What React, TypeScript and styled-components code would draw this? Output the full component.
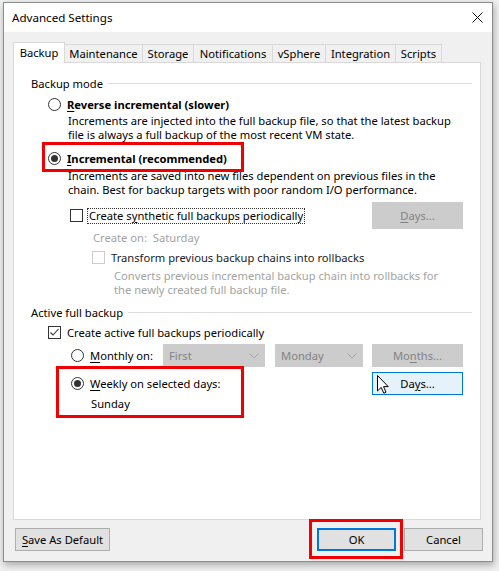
import React from "react";
import styled, { createGlobalStyle } from "styled-components";

const GlobalStyle = createGlobalStyle`
	html, body {
		margin: 0;
		padding: 0;
		background: #f0f0f0;
		font-family: "Noto Sans", "Liberation Sans", sans-serif;
		font-size: 11.2px;
		color: #000;
	}
	* {
		box-sizing: border-box;
	}
`;

const Page = styled.div`
	width: 499px;
	height: 571px;
	padding: 2px 0 0 3px;
	overflow: hidden;
`;

const Dialog = styled.div`
	width: 490px;
	height: 560px;
	border: 1px solid #8c8c8c;
	background: #f0f0f0;
	box-shadow: 1px 3px 7px rgba(0, 0, 0, 0.3);
	display: flex;
	flex-direction: column;
`;

const TitleBar = styled.div`
	height: 29px;
	background: #fff;
	display: flex;
	align-items: center;
	justify-content: space-between;
	padding: 0 9px 0 8px;
	font-size: 11.6px;
`;

const Body = styled.div`
	flex: 1;
	display: flex;
	flex-direction: column;
	padding: 10px 10px 0 9px;
`;

const TabStrip = styled.div`
	display: flex;
	height: 21px;
	align-items: flex-start;
	position: relative;
	z-index: 1;
`;

const Tab = styled.div<{ $w: number; $active?: boolean }>`
	width: ${(p) => p.$w}px;
	height: ${(p) => (p.$active ? 21 : 18)}px;
	margin-top: ${(p) => (p.$active ? 0 : 2)}px;
	margin-left: ${(p) => (p.$active ? 0 : -1)}px;
	border: 1px solid #d9d9d9;
	border-bottom: none;
	background: ${(p) => (p.$active ? "#fff" : "#f0f0f0")};
	display: flex;
	align-items: center;
	justify-content: center;
	padding-bottom: ${(p) => (p.$active ? 2 : 0)}px;
	white-space: nowrap;
`;

const Panel = styled.div`
	margin-top: -1px;
	width: 468px;
	height: 458px;
	border: 1px solid #d9d9d9;
	background: #fff;
	display: flex;
	flex-direction: column;
	padding: 0 8px 0 0;
`;

const GroupHeader = styled.div<{ $top: number }>`
	height: 16px;
	margin-top: ${(p) => p.$top}px;
	padding-left: 17px;
	display: flex;
	align-items: center;
	gap: 5px;
	white-space: nowrap;

	&::after {
		content: "";
		flex: 1;
		height: 1px;
		background: #dcdcdc;
	}
`;

const Row = styled.div<{ $top: number; $h?: number; $indent: number }>`
	position: relative;
	height: ${(p) => p.$h ?? 16}px;
	margin-top: ${(p) => p.$top}px;
	padding: 0 9px 0 ${(p) => p.$indent}px;
	display: flex;
	align-items: center;
	white-space: nowrap;
`;

const Desc = styled.div<{ $top: number; $indent: number; $muted?: boolean }>`
	margin-top: ${(p) => p.$top}px;
	padding-left: ${(p) => p.$indent}px;
	line-height: 14px;
	color: ${(p) => (p.$muted ? "#a3a3a3" : "#000")};
	white-space: nowrap;
`;

const Line = styled.div`
	height: 14px;
`;

const RadioCircle = styled.span<{ $checked?: boolean }>`
	width: 13px;
	height: 13px;
	border: 1px solid #333;
	border-radius: 50%;
	background: #fff;
	flex-shrink: 0;
	display: flex;
	align-items: center;
	justify-content: center;

	&::after {
		content: "";
		width: 7px;
		height: 7px;
		border-radius: 50%;
		background: ${(p) => (p.$checked ? "#333" : "transparent")};
	}
`;

const CheckBox = styled.span<{ $disabled?: boolean }>`
	width: 13px;
	height: 13px;
	border: 1px solid ${(p) => (p.$disabled ? "#cccccc" : "#333")};
	background: #fff;
	flex-shrink: 0;
	display: flex;
	align-items: center;
	justify-content: center;
`;

const Label = styled.span<{ $bold?: boolean; $gap?: number; $color?: string }>`
	margin-left: ${(p) => p.$gap ?? 6}px;
	font-weight: ${(p) => (p.$bold ? 700 : 400)};
	color: ${(p) => p.$color ?? "#000"};
`;

const FocusLabel = styled.span`
	margin-left: 4px;
	border: 1px dotted #333;
	padding: 0 1px;
	line-height: 14px;
`;

const Key = styled.span`
	text-decoration: underline;
	text-underline-offset: 2px;
`;

const Spacer = styled.div`
	flex: 1;
`;

type Variant = "disabled" | "hover" | "default";

const Button = styled.div<{ $w: number; $h?: number; $gap?: number; $variant?: Variant }>`
	position: relative;
	width: ${(p) => p.$w}px;
	height: ${(p) => p.$h ?? 23}px;
	margin-left: ${(p) => p.$gap ?? 0}px;
	flex-shrink: 0;
	display: flex;
	align-items: center;
	justify-content: center;
	background: ${(p) =>
		p.$variant === "disabled" ? "#cccccc" : p.$variant === "hover" ? "#e5f1fb" : "#e1e1e1"};
	border: ${(p) =>
		p.$variant === "disabled"
			? "1px solid #cccccc"
			: p.$variant === "hover"
			? "1px solid #0078d7"
			: p.$variant === "default"
			? "2px solid #0078d7"
			: "1px solid #adadad"};
	color: ${(p) => (p.$variant === "disabled" ? "#838383" : "#000")};
`;

const Dropdown = styled.div<{ $w: number; $gap: number }>`
	width: ${(p) => p.$w}px;
	height: 23px;
	margin-left: ${(p) => p.$gap}px;
	flex-shrink: 0;
	background: #cccccc;
	color: #838383;
	display: flex;
	align-items: center;
	justify-content: space-between;
	padding: 0 6px;
`;

const Highlight = styled.div<{ $left: number; $top: number; $w: number; $h: number }>`
	position: absolute;
	left: ${(p) => p.$left}px;
	top: ${(p) => p.$top}px;
	width: ${(p) => p.$w}px;
	height: ${(p) => p.$h}px;
	border: 3px solid #f00000;
	pointer-events: none;
`;

const Block = styled.div`
	position: relative;
`;

const Footer = styled.div`
	display: flex;
	align-items: center;
	padding: 8px 0 0 2px;
	width: 470px;
`;

const OkWrap = styled.div`
	position: relative;
	margin-right: 8px;
`;

const Cursor = styled.svg`
	position: absolute;
	left: 4px;
	top: 2px;
`;

function Chevron() {
	return (
		<svg width='10' height='6' viewBox='0 0 10 6'>
			<path d='M0.5 0.5 L5 5 L9.5 0.5' fill='none' stroke='#a6a6a6' strokeWidth='1' />
		</svg>
	);
}

function Check() {
	return (
		<svg width='11' height='11' viewBox='0 0 11 11'>
			<path d='M1.5 5.5 L4 8 L9.5 2' fill='none' stroke='#333' strokeWidth='1.1' />
		</svg>
	);
}

const tabs = [
	{ name: "Backup", w: 52 },
	{ name: "Maintenance", w: 79 },
	{ name: "Storage", w: 52 },
	{ name: "Notifications", w: 80 },
	{ name: "vSphere", w: 54 },
	{ name: "Integration", w: 71 },
	{ name: "Scripts", w: 47 },
];

export default function App() {
	return (
		<Page>
			<GlobalStyle />
			<Dialog>
				<TitleBar>
					<span>Advanced Settings</span>
					<svg width='11' height='11' viewBox='0 0 11 11'>
						<path d='M0.5 0.5 L10.5 10.5 M10.5 0.5 L0.5 10.5' stroke='#111' strokeWidth='1' />
					</svg>
				</TitleBar>
				<Body>
					<TabStrip>
						{tabs.map((t, i) => (
							<Tab key={t.name} $w={t.w} $active={i === 0}>
								{t.name}
							</Tab>
						))}
					</TabStrip>
					<Panel>
						<GroupHeader $top={12}>Backup mode</GroupHeader>
						<Row $top={5} $indent={34}>
							<RadioCircle />
							<Label $bold>
								<Key>R</Key>everse incremental (slower)
							</Label>
						</Row>
						<Desc $top={2} $indent={54}>
							<Line>Increments are injected into the full backup file, so that the latest backup</Line>
							<Line>file is always a full backup of the most recent VM state.</Line>
						</Desc>
						<Row $top={8} $indent={34}>
							<Highlight $left={28} $top={-8} $w={202} $h={30} />
							<RadioCircle $checked />
							<Label $bold>
								<Key>I</Key>ncremental (recommended)
							</Label>
						</Row>
						<Desc $top={3} $indent={54}>
							<Line>Increments are saved into new files dependent on previous files in the</Line>
							<Line>chain. Best for backup targets with poor random I/O performance.</Line>
						</Desc>
						<Row $top={5} $h={27} $indent={56}>
							<CheckBox />
							<FocusLabel>
								Create s<Key>y</Key>nthetic full backups periodically
							</FocusLabel>
							<Spacer />
							<Button $w={91} $h={27} $variant='disabled'>
								<span>
									<Key>D</Key>ays...
								</span>
							</Button>
						</Row>
						<Desc $top={2} $indent={79} $muted>
							<Line>Create on:&nbsp;&nbsp;Saturday</Line>
						</Desc>
						<Row $top={4} $indent={78}>
							<CheckBox $disabled />
							<Label $color='#222'>Transform previous backup chains into rollbacks</Label>
						</Row>
						<Desc $top={4} $indent={100} $muted>
							<Line>Converts previous incremental backup chain into rollbacks for</Line>
							<Line>the newly created full backup file.</Line>
						</Desc>
						<GroupHeader $top={7}>Active full backup</GroupHeader>
						<Row $top={4} $indent={34}>
							<CheckBox>
								<Check />
							</CheckBox>
							<Label>Create active full backups periodically</Label>
						</Row>
						<Row $top={4} $h={23} $indent={57}>
							<RadioCircle />
							<Label>
								<Key>M</Key>onthly on:
							</Label>
							<Spacer />
							<Dropdown $w={102} $gap={0}>
								<span>First</span>
								<Chevron />
							</Dropdown>
							<Dropdown $w={88} $gap={10}>
								<span>Monday</span>
								<Chevron />
							</Dropdown>
							<Button $w={91} $gap={9} $variant='disabled'>
								<span>
									Mo<Key>n</Key>ths...
								</span>
							</Button>
						</Row>
						<Block>
							<Highlight $left={42} $top={-1} $w={188} $h={52} />
							<Row $top={5} $h={23} $indent={57}>
								<RadioCircle $checked />
								<Label>
									<Key>W</Key>eekly on selected days:
								</Label>
								<Spacer />
								<Button $w={91} $variant='hover'>
									<span>
										Da<Key>y</Key>s...
									</span>
									<Cursor width='12' height='19' viewBox='0 0 12 19'>
										<path
											d='M0.5 0.5 L0.5 16 L4.2 12.4 L6.8 18.2 L9 17.2 L6.5 11.6 L11.2 11.6 Z'
											fill='#fff'
											stroke='#000'
											strokeWidth='1'
										/>
									</Cursor>
								</Button>
							</Row>
							<Desc $top={2} $indent={77}>
								<Line>Sunday</Line>
							</Desc>
						</Block>
					</Panel>
					<Footer>
						<Button $w={95}>
							<span>
								<Key>S</Key>ave As Default
							</span>
						</Button>
						<Spacer />
						<OkWrap>
							<Highlight $left={-8} $top={-9} $w={94} $h={40} />
							<Button $w={79} $variant='default'>
								OK
							</Button>
						</OkWrap>
						<Button $w={79}>Cancel</Button>
					</Footer>
				</Body>
			</Dialog>
		</Page>
	);
}
